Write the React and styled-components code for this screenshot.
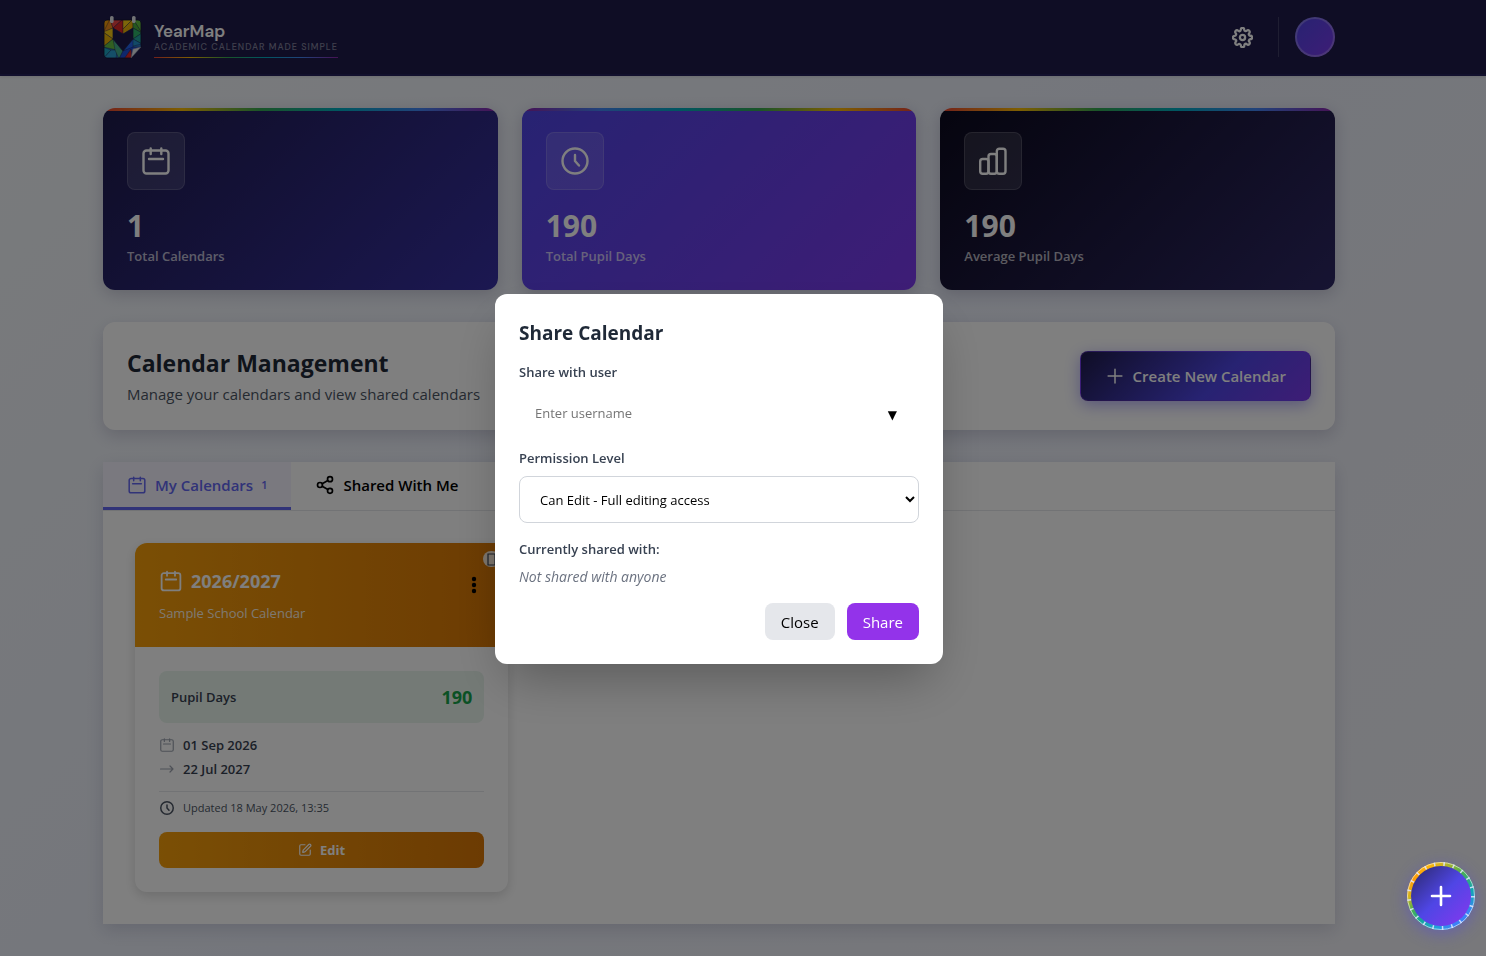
import React, { useState } from "react";
import styled, { createGlobalStyle, css } from "styled-components";
import { Share2, SquarePen } from "lucide-react";
import { FiSettings } from "react-icons/fi";

const GlobalStyle = createGlobalStyle`
  * {
    box-sizing: border-box;
  }

  body {
    margin: 0;
    font-family: "Segoe UI", "Open Sans", "Noto Sans", sans-serif;
    font-size: 15px;
    line-height: 24px;
    color: #1f2937;
  }

  h1, h2, h3, p {
    margin: 0;
  }

  button, input, select {
    font-family: inherit;
  }
`;

const RAINBOW = "#ea4335, #fbbc04, #34a853, #00acc1, #4285f4, #8e24aa";
const RAINBOW_REVERSED =
  "#8e24aa, #4285f4, #00acc1, #34a853, #fbbc04, #ea4335";

const Page = styled.div`
  min-height: 100vh;
  padding-bottom: 32px;
  background: linear-gradient(135deg, #f3f6f9 0%, #e9edf8 50%, #f1f1f6 100%);
`;

const Header = styled.header`
  padding-right: 48px;
  background: #1e1b4b;
  border-bottom: 2px solid #25215a;
  box-shadow: 0 1px 3px rgba(0, 0, 0, 0.1);
`;

const Container = styled.div`
  max-width: 1280px;
  margin: 0 auto;
  padding: 0 24px;
`;

const HeaderRow = styled(Container)`
  display: flex;
  align-items: center;
  justify-content: space-between;
  height: 74px;
`;

const Brand = styled.a`
  display: flex;
  align-items: center;
  gap: 12px;
  text-decoration: none;
`;

const BrandText = styled.div`
  display: flex;
  flex-direction: column;
  padding-top: 4px;
`;

const BrandName = styled.span`
  font-family: "DM Sans", Inter, sans-serif;
  font-size: 17px;
  font-weight: 600;
  line-height: 20px;
  color: #ffffff;
`;

const Tagline = styled.span`
  padding-bottom: 4px;
  font-family: "DM Sans", Inter, sans-serif;
  font-size: 9px;
  font-weight: 500;
  line-height: 12px;
  letter-spacing: 1px;
  text-transform: uppercase;
  color: rgba(255, 255, 255, 0.45);
`;

const BrandLine = styled.span`
  height: 1px;
  background: linear-gradient(90deg, ${RAINBOW});
`;

const HeaderActions = styled.div`
  display: flex;
  align-items: center;
  gap: 16px;
`;

const IconButton = styled.button`
  display: flex;
  align-items: center;
  justify-content: center;
  width: 40px;
  height: 40px;
  padding: 0;
  border: 0;
  background: none;
  color: #ffffff;
`;

const Divider = styled.span`
  width: 1px;
  height: 40px;
  background: rgba(255, 255, 255, 0.15);
`;

const Avatar = styled.button`
  width: 40px;
  height: 40px;
  padding: 0;
  border: 2px solid rgba(255, 255, 255, 0.25);
  border-radius: 50%;
  background: linear-gradient(135deg, #4f46e5, #7c3aed) border-box;
`;

const Main = styled.main`
  padding: 32px 48px 0 0;
`;

const Sections = styled(Container)`
  display: flex;
  flex-direction: column;
  gap: 32px;
`;

const Stats = styled.section`
  display: grid;
  grid-template-columns: repeat(3, 1fr);
  gap: 24px;
`;

const StatCard = styled.article`
  padding: 24px;
  border-radius: 12px;
  background: linear-gradient(
        90deg,
        ${(props) => (props.$reversed ? RAINBOW_REVERSED : RAINBOW)}
      )
      top / 100% 3px no-repeat,
    linear-gradient(135deg, ${(props) => props.$colors});
  box-shadow: 0 4px 16px rgba(30, 27, 75, 0.2);
  color: #ffffff;
`;

const StatIcon = styled.div`
  display: flex;
  align-items: center;
  justify-content: center;
  width: 58px;
  height: 58px;
  margin-bottom: 16px;
  border: 1px solid rgba(255, 255, 255, 0.15);
  border-radius: 8px;
  background: rgba(255, 255, 255, 0.12);
`;

const StatValue = styled.div`
  font-size: 30px;
  font-weight: 700;
  line-height: 40px;
`;

const StatLabel = styled.div`
  font-size: 13px;
  font-weight: 600;
  line-height: 20px;
  color: rgba(255, 255, 255, 0.7);
`;

const Management = styled.section`
  display: flex;
  align-items: center;
  justify-content: space-between;
  padding: 24px;
  border-radius: 12px;
  background: #ffffff;
  box-shadow: 0 6px 16px rgba(30, 27, 75, 0.16);
`;

const ManagementTitle = styled.h1`
  margin-bottom: 2px;
  font-size: 23px;
  font-weight: 700;
  line-height: 34px;
`;

const ManagementText = styled.p`
  color: #4b5563;
`;

const CreateButton = styled.button`
  display: flex;
  align-items: center;
  gap: 8px;
  height: 50px;
  padding: 0 24px;
  border: 1px solid rgba(124, 58, 237, 0.4);
  border-radius: 8px;
  background: linear-gradient(135deg, #1e1b4b, #4f46e5 60%, #7c3aed);
  box-shadow: 0 4px 16px rgba(79, 70, 229, 0.45);
  font-size: 15px;
  font-weight: 600;
  color: #ffffff;
`;

const Panel = styled.section`
  background: #ffffff;
  box-shadow: 0 6px 16px rgba(30, 27, 75, 0.14);
`;

const Tabs = styled.div`
  display: flex;
  border-bottom: 1px solid #e5e7eb;
`;

const Tab = styled.button`
  display: flex;
  align-items: center;
  gap: 8px;
  height: 48px;
  padding: 0 24px;
  border: 0;
  border-bottom: 3px solid transparent;
  background: none;
  font-size: 15px;
  font-weight: 600;
  color: #000000;

  ${(props) =>
    props.$active &&
    css`
      border-bottom-color: #6366f1;
      background: #f4f2ff;
      color: #6366f1;
    `}
`;

const TabCount = styled.span`
  font-size: 11px;
`;

const CalendarGrid = styled.div`
  display: grid;
  grid-template-columns: repeat(3, 1fr);
  gap: 24px;
  padding: 32px;
`;

const CalendarCard = styled.article`
  position: relative;
  border-radius: 12px;
  background: #ffffff;
  box-shadow: 0 4px 12px rgba(0, 0, 0, 0.15);
  overflow: hidden;
`;

const CardBadge = styled.span`
  position: absolute;
  top: 8px;
  right: 8px;
  display: flex;
  align-items: center;
  justify-content: center;
  width: 17px;
  height: 16px;
  border-radius: 8px;
  background: rgba(255, 255, 255, 0.85);
`;

const CardHeader = styled.div`
  display: flex;
  justify-content: space-between;
  padding: 24px;
  background: linear-gradient(90deg, #f59e0b, #d97706);
  color: #ffffff;
`;

const CardTitle = styled.h2`
  display: flex;
  align-items: center;
  gap: 8px;
  margin-bottom: 8px;
  font-size: 18px;
  font-weight: 700;
  line-height: 28px;
`;

const CardSubtitle = styled.p`
  font-size: 13px;
  line-height: 20px;
  color: rgba(255, 255, 255, 0.9);
`;

const MenuButton = styled.button`
  align-self: flex-start;
  display: flex;
  align-items: center;
  height: 36px;
  padding: 0;
  border: 0;
  background: none;
  color: #000000;
`;

const CardBody = styled.div`
  padding: 24px;
`;

const PupilDays = styled.div`
  display: flex;
  align-items: center;
  justify-content: space-between;
  margin-bottom: 12px;
  padding: 12px;
  border-radius: 8px;
  background: #e8f5ed;
  font-size: 13px;
  font-weight: 600;
  line-height: 28px;
  color: #374151;
`;

const PupilCount = styled.strong`
  font-size: 18px;
  font-weight: 700;
  color: #16a34a;
`;

const Dates = styled.div`
  display: flex;
  flex-direction: column;
  gap: 4px;
  padding-bottom: 12px;
  border-bottom: 1px solid #e5e7eb;
`;

const DateRow = styled.div`
  display: flex;
  align-items: center;
  gap: 8px;
  font-size: 13px;
  font-weight: 600;
  line-height: 20px;
  color: #374151;

  svg {
    color: #9ca3af;
  }
`;

const Updated = styled.div`
  display: flex;
  align-items: center;
  gap: 8px;
  margin: 8px 0 16px;
  font-size: 11px;
  line-height: 16px;
  color: #4b5563;
`;

const EditButton = styled.button`
  display: flex;
  align-items: center;
  justify-content: center;
  gap: 8px;
  width: 100%;
  height: 36px;
  border: 0;
  border-radius: 8px;
  background: linear-gradient(90deg, #f59e0b, #d97706);
  font-size: 13px;
  font-weight: 700;
  color: #ffffff;
`;

const Overlay = styled.div`
  position: fixed;
  inset: 0;
  display: flex;
  align-items: center;
  justify-content: center;
  padding: 2px 48px 0 0;
  background: rgba(0, 0, 0, 0.5);
`;

const Dialog = styled.form`
  width: 100%;
  max-width: 448px;
  padding: 24px;
  border-radius: 12px;
  background: #ffffff;
  box-shadow: 0 24px 48px -12px rgba(0, 0, 0, 0.3);
`;

const DialogTitle = styled.h2`
  margin-bottom: 14px;
  font-size: 19px;
  font-weight: 700;
  line-height: 30px;
`;

const Label = styled.label`
  display: block;
  margin-bottom: 8px;
  font-size: 13px;
  font-weight: 600;
  line-height: 20px;
  color: #374151;
`;

const UserField = styled.div`
  display: flex;
  align-items: center;
  height: 46px;
  margin-bottom: 12px;
`;

const UserInput = styled.input`
  flex: 1;
  height: 100%;
  padding: 0 16px;
  border: 0;
  outline: 0;
  background: none;
  font-size: 13px;

  &::placeholder {
    color: #757575;
  }
`;

const UserToggle = styled.button`
  padding: 4px 22px 0;
  border: 0;
  background: none;
  font-family: "DejaVu Sans", sans-serif;
  font-size: 12px;
  color: #000000;
`;

const PermissionSelect = styled.select`
  display: block;
  width: 100%;
  height: 47px;
  margin-bottom: 16px;
  padding: 0 0 0 16px;
  border: 1px solid #d1d5db;
  border-radius: 8px;
  background: #ffffff;
  font-size: 13px;
  color: #000000;
`;

const SharedTitle = styled.h3`
  margin-bottom: 8px;
  font-size: 13px;
  font-weight: 600;
  line-height: 20px;
  color: #374151;
`;

const SharedEmpty = styled.p`
  margin-bottom: 16px;
  font-size: 14px;
  font-style: italic;
  line-height: 20px;
  color: #6b7280;
`;

const DialogActions = styled.div`
  display: flex;
  justify-content: flex-end;
  gap: 12px;
`;

const DialogButton = styled.button`
  height: 37px;
  padding: 0 16px;
  border: 0;
  border-radius: 8px;
  background: ${(props) => (props.$primary ? "#9333ea" : "#e5e7eb")};
  font-size: 15px;
  color: ${(props) => (props.$primary ? "#ffffff" : "#000000")};
`;

const AddButton = styled.button`
  position: fixed;
  right: 11px;
  bottom: 26px;
  width: 68px;
  height: 68px;
  padding: 0;
  border: 0;
  border-radius: 50%;
  background: conic-gradient(
    #d4b41c,
    #4caf50 40deg,
    #12a5b5 80deg,
    #3b82f6 120deg,
    #3b82f6 160deg,
    #1fa2d8 190deg,
    #14a79b 220deg,
    #4caf50 245deg,
    #d4b41c 268deg,
    #ff9d0a 300deg,
    #fbb40a 340deg,
    #d4b41c
  );
  box-shadow: 0 4px 16px rgba(79, 70, 229, 0.45);
`;

// All line icons share one padded 32 unit box
const iconProps = {
  viewBox: "-2 -2 32 32",
  fill: "none",
  stroke: "currentColor",
  strokeLinecap: "round",
  strokeLinejoin: "round",
  "aria-hidden": true,
};

const CalendarIcon = ({ size = 32 }) => (
  <svg {...iconProps} width={size} height={size} strokeWidth="2.4">
    <rect x="1.5" y="3.5" width="25" height="23" rx="3" />
    <path d="M8.7 1.5v5.5M19.3 1.5v5.5M7 12h14" />
  </svg>
);

const ClockIcon = ({ size = 32, weight = 2.4 }) => (
  <svg {...iconProps} width={size} height={size} strokeWidth={weight}>
    <circle cx="14" cy="14" r="12.5" />
    <path d="M14 8v6l4 4.5" />
  </svg>
);

const BarsIcon = () => (
  <svg {...iconProps} width="32" height="32" strokeWidth="2.4">
    <rect x="1.2" y="12" width="8.3" height="14.7" rx="2.5" />
    <rect x="9.5" y="7" width="8.3" height="19.7" rx="2.5" />
    <rect x="17.8" y="1.7" width="8.7" height="25" rx="2.5" />
  </svg>
);

const ArrowIcon = () => (
  <svg {...iconProps} width="16" height="16" strokeWidth="2.4">
    <path d="M1 14h25M20 8l6 6-6 6" />
  </svg>
);

const PlusIcon = () => (
  <svg {...iconProps} width="20" height="20" strokeWidth="2.4">
    <path d="M14 3v22M3 14h22" />
  </svg>
);

const DotsIcon = () => (
  <svg width="20" height="20" viewBox="0 0 20 20" aria-hidden="true">
    <circle cx="10" cy="4" r="2.2" />
    <circle cx="10" cy="10" r="2.2" />
    <circle cx="10" cy="16" r="2.2" />
  </svg>
);

const Logo = () => (
  <svg width="39" height="44" viewBox="0 0 39 44" aria-hidden="true">
    <defs>
      <clipPath id="logo-clip">
        <path d="M4 5h31a3 3 0 0 1 3 3v24L28 43H4a3 3 0 0 1-3-3V8a3 3 0 0 1 3-3z" />
      </clipPath>
    </defs>
    <g clipPath="url(#logo-clip)" stroke="#221f45" strokeWidth="0.4">
      <path d="M0 4h39v40H0z" fill="#2b7fd0" />
      <path d="M0 4h10v9L0 20z" fill="#f59e0b" />
      <path d="M7 4l3 9L0 18z" fill="#f08c1a" />
      <path d="M7 4h13L10 13z" fill="#ef4444" />
      <path d="M20 4v15l-10-6z" fill="#dc2626" />
      <path d="M20 4h10L20 14z" fill="#facc15" />
      <path d="M30 4v9l-10 6v-5z" fill="#eab308" />
      <path d="M30 4h9v15z" fill="#65c043" />
      <path d="M30 4v9l9 5z" fill="#4cae3f" />
      <path d="M0 17l10-4v11z" fill="#facc15" />
      <path d="M0 17l10 7-10 8z" fill="#eab308" />
      <path d="M10 24L0 32l14 3z" fill="#65c043" />
      <path d="M0 32l8 3-8 9z" fill="#1ea7c4" />
      <path d="M14 35l-6 0-8 9h13z" fill="#2b9fd0" />
      <path d="M10 24l10 12-4 8-4-9z" fill="#45b08a" />
      <path d="M30 13l9 5-9 6z" fill="#2fb56b" />
      <path d="M30 24l9-6v11z" fill="#22a6a0" />
      <path d="M30 24l9 5-13 3z" fill="#2493cf" />
      <path d="M30 24l-10 12 10-3z" fill="#2563eb" />
      <path d="M20 36l10-4h9v12H16z" fill="#1d4ed8" />
      <path d="M28 34l-7 10h8z" fill="#dc2626" />
      <path d="M10 13l10 6 10-6v11L20 36 10 24z" fill="#1e1b4b" />
    </g>
    <path
      d="M4 5h31a3 3 0 0 1 3 3v24L28 43H4a3 3 0 0 1-3-3V8a3 3 0 0 1 3-3z"
      fill="none"
      stroke="#12102e"
      strokeWidth="0.8"
    />
    <path d="M28 43l2-9 8-2z" fill="#e5e7eb" stroke="#8d8fa0" strokeWidth="0.5" />
    <rect x="7" y="1" width="3.6" height="7" rx="1.6" fill="#e5e7eb" />
    <rect x="29" y="1" width="3.6" height="7" rx="1.6" fill="#e5e7eb" />
  </svg>
);

const FabFace = () => (
  <svg width="68" height="68" viewBox="0 0 68 68" aria-hidden="true">
    <defs>
      <linearGradient id="fab-fill" x1="0" y1="0" x2="1" y2="1">
        <stop offset="0.1" stopColor="#312e81" />
        <stop offset="0.5" stopColor="#4f46e5" />
        <stop offset="0.9" stopColor="#7c3aed" />
      </linearGradient>
    </defs>
    <circle
      cx="34"
      cy="34"
      r="33.5"
      fill="none"
      stroke="#ffffff"
      strokeOpacity="0.55"
    />
    <circle
      cx="34"
      cy="34"
      r="32"
      fill="none"
      stroke="#e0e7ff"
      strokeOpacity="0.85"
      strokeWidth="4"
      pathLength="210"
      strokeDasharray="1.6 8.4"
    />
    <circle cx="34" cy="34" r="30" fill="url(#fab-fill)" />
    <path
      d="M34 25v18M25 34h18"
      stroke="#ffffff"
      strokeWidth="2.6"
      strokeLinecap="round"
    />
  </svg>
);

const STATS = [
  {
    label: "Total Calendars",
    value: 1,
    icon: <CalendarIcon />,
    colors: "#1e1b4b, #3730a3",
  },
  {
    label: "Total Pupil Days",
    value: 190,
    icon: <ClockIcon />,
    colors: "#4f46e5, #7c3aed",
    reversed: true,
  },
  {
    label: "Average Pupil Days",
    value: 190,
    icon: <BarsIcon />,
    colors: "#0c0a1e, #2e2865",
  },
];

const ShareDialog = ({ onClose }) => {
  const [username, setUsername] = useState("");

  return (
    <Overlay>
      <Dialog
        role="dialog"
        aria-labelledby="share-title"
        onSubmit={(e) => e.preventDefault()}
      >
        <DialogTitle id="share-title">Share Calendar</DialogTitle>
        <Label htmlFor="share-user">Share with user</Label>
        <UserField>
          <UserInput
            id="share-user"
            placeholder="Enter username"
            value={username}
            onChange={(e) => setUsername(e.target.value)}
          />
          <UserToggle type="button" aria-label="Show users">
            ▼
          </UserToggle>
        </UserField>
        <Label htmlFor="share-permission">Permission Level</Label>
        <PermissionSelect id="share-permission" defaultValue="edit">
          <option value="edit">Can Edit - Full editing access</option>
        </PermissionSelect>
        <SharedTitle>Currently shared with:</SharedTitle>
        <SharedEmpty>Not shared with anyone</SharedEmpty>
        <DialogActions>
          <DialogButton type="button" onClick={onClose}>
            Close
          </DialogButton>
          <DialogButton type="submit" $primary>
            Share
          </DialogButton>
        </DialogActions>
      </Dialog>
    </Overlay>
  );
};

const App = () => {
  const [sharing, setSharing] = useState(true);

  return (
    <>
      <GlobalStyle />
      <Page>
        <Header>
          <HeaderRow>
            <Brand href="#home">
              <Logo />
              <BrandText>
                <BrandName>YearMap</BrandName>
                <Tagline>Academic calendar made simple</Tagline>
                <BrandLine />
              </BrandText>
            </Brand>
            <HeaderActions>
              <IconButton aria-label="Settings">
                <FiSettings size={21} strokeWidth={2.6} />
              </IconButton>
              <Divider />
              <Avatar aria-label="Account" />
            </HeaderActions>
          </HeaderRow>
        </Header>
        <Main>
          <Sections>
            <Stats>
              {STATS.map((x) => (
                <StatCard
                  key={x.label}
                  $colors={x.colors}
                  $reversed={x.reversed}
                >
                  <StatIcon>{x.icon}</StatIcon>
                  <StatValue>{x.value}</StatValue>
                  <StatLabel>{x.label}</StatLabel>
                </StatCard>
              ))}
            </Stats>
            <Management>
              <div>
                <ManagementTitle>Calendar Management</ManagementTitle>
                <ManagementText>
                  Manage your calendars and view shared calendars
                </ManagementText>
              </div>
              <CreateButton>
                <PlusIcon />
                Create New Calendar
              </CreateButton>
            </Management>
            <Panel>
              <Tabs role="tablist">
                <Tab role="tab" aria-selected="true" $active>
                  <CalendarIcon size={20} />
                  My Calendars
                  <TabCount>1</TabCount>
                </Tab>
                <Tab role="tab" aria-selected="false">
                  <Share2 size={20} />
                  Shared With Me
                </Tab>
              </Tabs>
              <CalendarGrid>
                <CalendarCard>
                  <CardHeader>
                    <div>
                      <CardTitle>
                        <CalendarIcon size={24} />
                        2026/2027
                      </CardTitle>
                      <CardSubtitle>Sample School Calendar</CardSubtitle>
                    </div>
                    <MenuButton
                      aria-label="Calendar menu"
                      onClick={() => setSharing(true)}
                    >
                      <DotsIcon />
                    </MenuButton>
                  </CardHeader>
                  <CardBadge>
                    <svg width="9" height="13" aria-hidden="true">
                      <path
                        d="M1 1h7v11H1z"
                        fill="none"
                        stroke="#374151"
                        strokeWidth="1.2"
                      />
                    </svg>
                  </CardBadge>
                  <CardBody>
                    <PupilDays>
                      Pupil Days
                      <PupilCount>190</PupilCount>
                    </PupilDays>
                    <Dates>
                      <DateRow>
                        <CalendarIcon size={16} />
                        01 Sep 2026
                      </DateRow>
                      <DateRow>
                        <ArrowIcon />
                        22 Jul 2027
                      </DateRow>
                    </Dates>
                    <Updated>
                      <ClockIcon size={16} weight={3} />
                      Updated 18 May 2026, 13:35
                    </Updated>
                    <EditButton>
                      <SquarePen size={14} />
                      Edit
                    </EditButton>
                  </CardBody>
                </CalendarCard>
              </CalendarGrid>
            </Panel>
          </Sections>
        </Main>
      </Page>
      {sharing && <ShareDialog onClose={() => setSharing(false)} />}
      <AddButton aria-label="Add calendar">
        <FabFace />
      </AddButton>
    </>
  );
};

export default App;
